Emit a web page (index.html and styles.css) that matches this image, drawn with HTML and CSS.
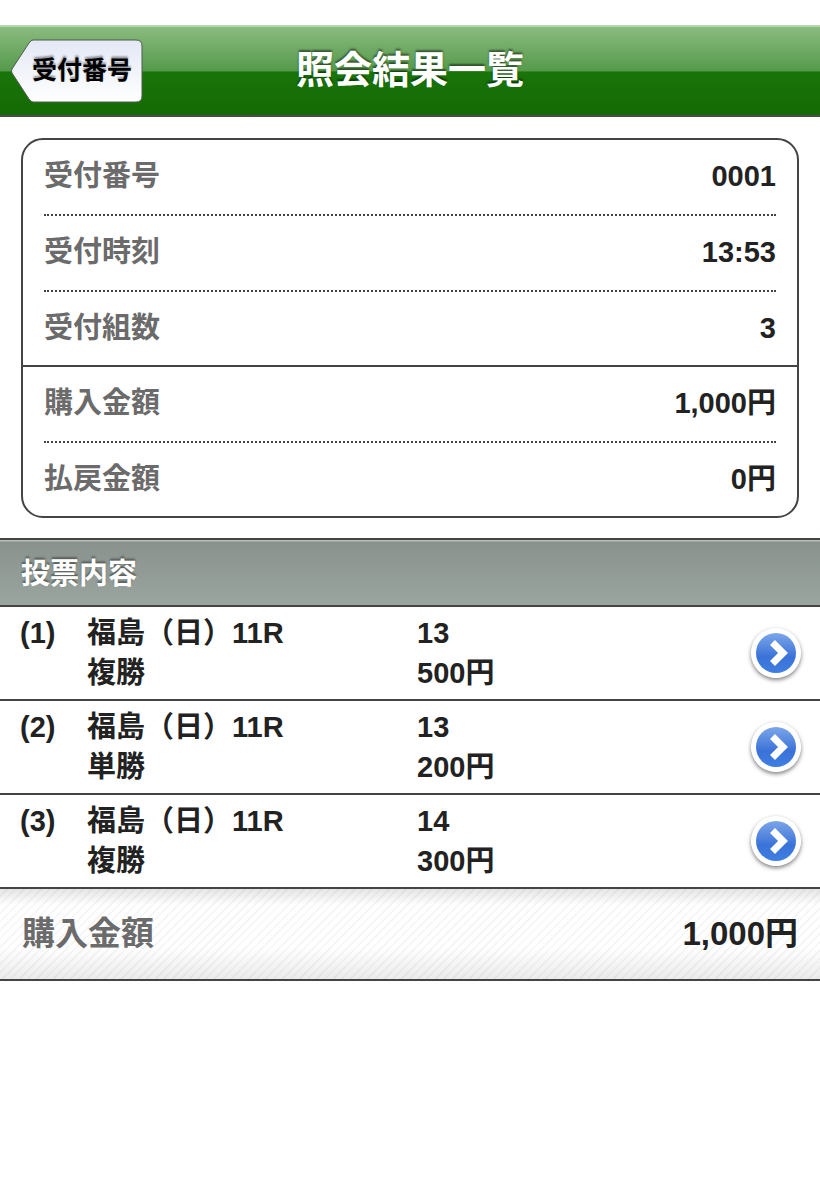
FILE: index.html
```html
<!DOCTYPE html>
<html lang="ja">
<head>
  <meta charset="UTF-8">
  <meta name="viewport" content="width=device-width, initial-scale=1.0">
  <title>照会結果一覧</title>
  <link rel="stylesheet" href="styles.css">
</head>
<body>
  <!-- shared shapes -->
  <svg class="defs" width="0" height="0" aria-hidden="true">
    <defs>
      <linearGradient id="blue" x1="0" y1="0" x2="0" y2="1">
        <stop offset="0" stop-color="#7ba6ea"/>
        <stop offset="0.45" stop-color="#4c80dc"/>
        <stop offset="0.6" stop-color="#3a72d8"/>
        <stop offset="1" stop-color="#3f7fe2"/>
      </linearGradient>
      <linearGradient id="silver" x1="0" y1="0" x2="0" y2="1">
        <stop offset="0" stop-color="#e3e8f5"/>
        <stop offset="1" stop-color="#ffffff"/>
      </linearGradient>
      <symbol id="arrow" viewBox="0 0 50 50">
        <circle cx="25" cy="25" r="25" fill="#fff"/>
        <circle cx="25" cy="25" r="20" fill="url(#blue)"/>
        <path d="M21.5 14.5L32 25 21.5 35.5" fill="none" stroke="#fff" stroke-width="7"/>
      </symbol>
    </defs>
  </svg>

  <header class="header">
    <a class="back" href="#">
      <svg class="back-shape" viewBox="0 0 133 64" aria-hidden="true">
        <path d="M23 1H126Q132 1 132 7V57Q132 63 126 63H23Q21 63 19 60L2 34Q1 32 2 30L19 4Q21 1 23 1Z" fill="url(#silver)" stroke="#4f5a4f" stroke-width="1"/>
      </svg>
      <span class="back-text">受付番号</span>
    </a>
    <h1>照会結果一覧</h1>
  </header>

  <main>
    <div class="panel">
      <dl class="group">
        <div class="item"><dt>受付番号</dt><dd>0001</dd></div>
        <div class="item"><dt>受付時刻</dt><dd>13:53</dd></div>
        <div class="item"><dt>受付組数</dt><dd>3</dd></div>
      </dl>
      <dl class="group">
        <div class="item"><dt>購入金額</dt><dd>1,000円</dd></div>
        <div class="item"><dt>払戻金額</dt><dd>0円</dd></div>
      </dl>
    </div>

    <h2>投票内容</h2>
    <ul class="bets">
      <li>
        <a class="bet" href="#">
          <span>(1)</span>
          <span>福島（日）11R<br>複勝</span>
          <span>13<br>500円</span>
          <svg class="arrow" aria-hidden="true"><use href="#arrow"/></svg>
        </a>
      </li>
      <li>
        <a class="bet" href="#">
          <span>(2)</span>
          <span>福島（日）11R<br>単勝</span>
          <span>13<br>200円</span>
          <svg class="arrow" aria-hidden="true"><use href="#arrow"/></svg>
        </a>
      </li>
      <li>
        <a class="bet" href="#">
          <span>(3)</span>
          <span>福島（日）11R<br>複勝</span>
          <span>14<br>300円</span>
          <svg class="arrow" aria-hidden="true"><use href="#arrow"/></svg>
        </a>
      </li>
    </ul>

    <div class="total">
      <span class="total-label">購入金額</span>
      <span>1,000円</span>
    </div>
  </main>
</body>
</html>
```

FILE: styles.css
```css
* { margin: 0; padding: 0; box-sizing: border-box; }
body {
  padding-top: 25px;
  background: #fff;
  color: #222;
  font-family: "Liberation Sans", "Noto Sans CJK JP", sans-serif;
  font-size: 29px;
  font-weight: bold;
  line-height: 40px;
}
a { color: inherit; text-decoration: none; }
ul { list-style: none; }
.defs { display: block; }

/* Header */
.header {
  display: grid;
  grid-template-columns: 1fr auto 1fr;
  align-items: center;
  height: 92px;
  padding: 0 10px;
  border-top: 2px solid #b4d6ab;
  border-bottom: 2px solid #4c4c4c;
  background: linear-gradient(#8abb7f 0%, #559a4b 50%, #19750a 51%, #156a04 100%);
}
.header h1 {
  color: #fff;
  font-size: 38px;
  line-height: 48px;
  padding-bottom: 2px;
  text-shadow: 0 -2px 2px rgba(0,0,0,.5);
}
.back {
  position: relative;
  justify-self: start;
  width: 133px;
  height: 64px;
  padding: 11px 10px 13px 22px;
}
.back-shape {
  position: absolute;
  top: 0;
  left: 0;
  width: 100%;
  height: 100%;
}
.back-text {
  position: relative;
  display: block;
  color: #000;
  font-size: 25px;
  white-space: nowrap;
  text-shadow: 0 -2px 2px rgba(0,0,0,.4);
}

/* Receipt summary */
.panel {
  margin: 21px 21px 20px;
  border: 2px solid #444;
  border-radius: 22px;
}
.group + .group { border-top: 2px solid #444; }
.item {
  display: flex;
  justify-content: space-between;
  height: 76px;
  margin: 0 21px;
  padding-top: 16px;
  border-bottom: 2px dotted #444;
}
.item:last-child {
  height: 73px;
  border-bottom: none;
}
.item dt { color: #6b6b6b; }

/* Bets */
h2 {
  height: 69px;
  padding: 14px 21px;
  border-top: 2px solid #444;
  border-bottom: 2px solid #444;
  background: linear-gradient(#b5bdb8 0, #b5bdb8 1px, #89928c 2px, #9ba5a0 100%);
  color: #fff;
  font-size: 29px;
  text-shadow: 0 -2px 2px rgba(0,0,0,.4);
}
.bet {
  display: grid;
  grid-template-columns: 67px 330px 1fr 50px;
  padding: 6px 19px 6px 20px;
  border-bottom: 2px solid #444;
}
.arrow {
  align-self: center;
  width: 50px;
  height: 50px;
  border-radius: 50%;
  box-shadow: 0 2px 4px rgba(0,0,0,.5);
}

/* Total */
.total {
  display: flex;
  justify-content: space-between;
  padding: 25px 22px;
  border-bottom: 2px solid #444;
  background:
    linear-gradient(rgba(0,0,0,.1), transparent 18%, transparent 65%, rgba(0,0,0,.08)),
    repeating-linear-gradient(135deg, #fff 0, #fff 4px, #f4f4f4 5px, #f4f4f4 6px);
  font-size: 33px;
}
.total-label { color: #6b6b6b; }
```
